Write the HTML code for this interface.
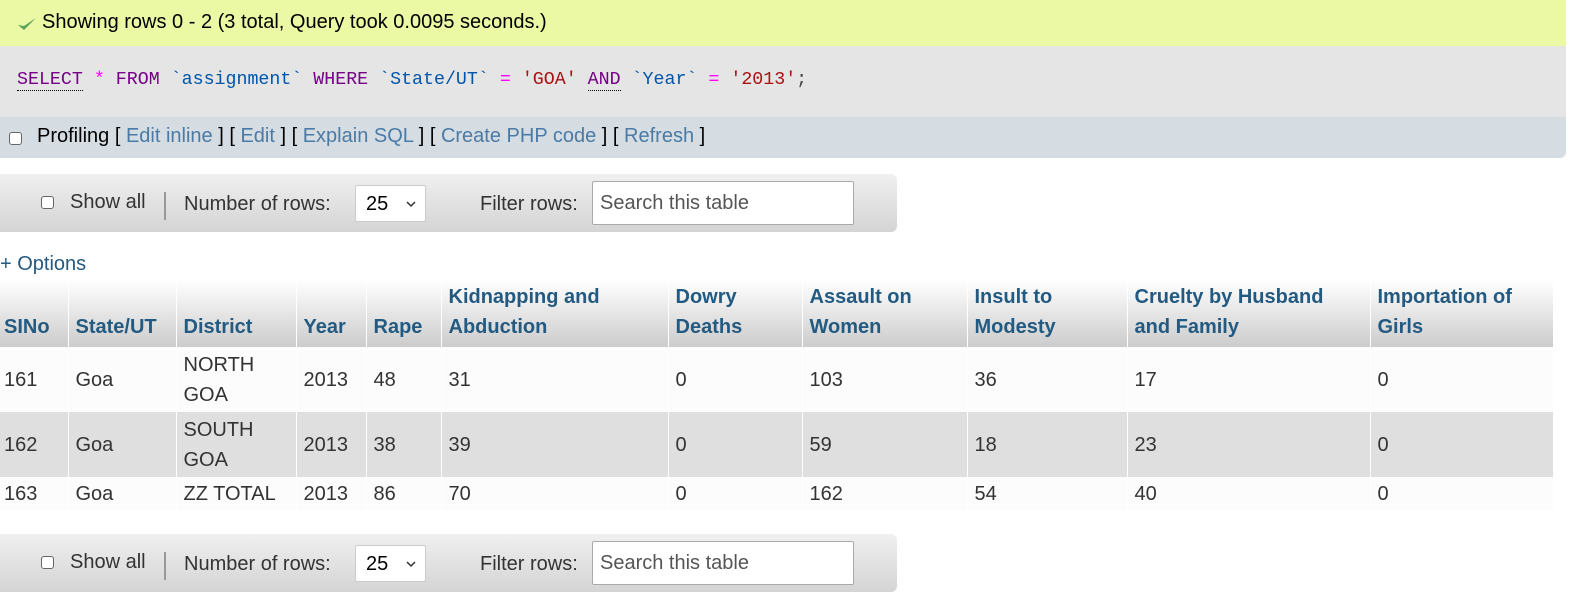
<!DOCTYPE html>
<html><head><style>
*{box-sizing:border-box;margin:0;padding:0}
body{width:1576px;height:600px;position:relative;background:#fff;font-family:"Liberation Sans",sans-serif;font-size:20px;color:#333;overflow:hidden}
.abs{position:absolute}
.top{left:0;top:0;width:1566px;height:46px;background:#ebf8a4;color:#000;}
.top span{position:absolute;left:42px;top:11px;white-space:nowrap}
.sql{left:0;top:46px;width:1566px;height:71px;background:#e5e5e5;font-family:"Liberation Mono",monospace;font-size:18.3px;}
.sql div{position:absolute;left:17px;top:24px;white-space:pre;color:#444}
.kw{color:#770088;border-bottom:1px dotted #000}
.k2{color:#770088}
.op{color:#ff00ff}
.id{color:#0055aa}
.st{color:#aa1111}
.prof{left:0;top:117px;width:1566px;height:41px;background:#d5dde3;border-radius:0 0 6px 0;color:#000}
.prof span{position:absolute;left:37px;top:8px;white-space:pre}
.prof a{color:#4a7aa5;text-decoration:none}
.cb{position:absolute;width:13px;height:13px;border:1px solid #666;border-radius:3px;background:#fff}
.nav{left:0;width:897px;height:58px;border-radius:0 6px 6px 0;background:linear-gradient(#f0f0f0,#d4d4d4)}
.nav .t{position:absolute;color:#333;white-space:pre}
.sel{position:absolute;left:355px;top:11px;width:71px;height:37px;background:#fff;border:1px solid #ccc;border-radius:2px}
.sel span{position:absolute;left:10px;top:7px;color:#000}
.inp{position:absolute;left:592px;top:7px;width:262px;height:44px;background:#fff;border:1px solid #aaa;border-radius:2px}
.inp span{position:absolute;left:7px;top:10px;color:#555}
table{position:absolute;left:0;top:280px;border-collapse:collapse;width:1553px;table-layout:fixed}
th{background:linear-gradient(#fff,#ccc);color:#235a81;font-weight:bold;text-align:left;vertical-align:bottom;padding:2px 0 5px 7px;line-height:30px;border-left:1px solid #fff;height:65px;white-space:nowrap;overflow:hidden}
th:first-child{border-left:none;padding-left:4px}
td{padding:0 0 0 7px;line-height:30px;border-left:1px solid #fff;white-space:nowrap;overflow:hidden}
td:first-child{padding-left:4px;border-left:none}
tr.a td{background:#fcfcfd;height:65px}
tr.b td{background:#dfdfdf;height:65px}
tr.c td{background:#fcfcfd;height:33px}
</style></head><body>
<div class="abs top"><svg style="position:absolute;left:17px;top:16px" width="20" height="16" viewBox="0 0 20 16"><path d="M1 9 L7 14 L19 2 L7 10 Z" fill="#5aa55a"/></svg><span>Showing rows 0 - 2 (3 total, Query took 0.0095 seconds.)</span></div>
<div class="abs sql"><div><span class="kw">SELECT</span> <span class="op">*</span> <span class="k2">FROM</span> <span class="id">`assignment`</span> <span class="k2">WHERE</span> <span class="id">`State/UT`</span> <span class="op">=</span> <span class="st">'GOA'</span> <span class="kw">AND</span> <span class="id">`Year`</span> <span class="op">=</span> <span class="st">'2013'</span>;</div></div>
<div class="abs prof"><div class="cb" style="left:9px;top:15px"></div><span>Profiling [ <a>Edit inline</a> ] [ <a>Edit</a> ] [ <a>Explain SQL</a> ] [ <a>Create PHP code</a> ] [ <a>Refresh</a> ]</span></div>

<div class="abs nav" style="top:174px">
<div class="cb" style="left:41px;top:22px"></div><span class="t" style="left:70px;top:17px">Show all</span>
<div style="position:absolute;left:164px;top:18px;width:2px;height:28px;background:#999"></div>
<span class="t" style="left:184px;top:19px">Number of rows:</span>
<div class="sel"><span>25</span><svg style="position:absolute;left:50px;top:15px" width="10" height="7"><path d="M1 1 L5 5 L9 1" stroke="#333" stroke-width="1.5" fill="none"/></svg></div>
<span class="t" style="left:480px;top:19px">Filter rows:</span>
<div class="inp"><span>Search this table</span></div>
</div>

<div class="abs" style="left:0;top:253px;color:#235a81">+ Options</div>

<table>
<colgroup><col style="width:68px"><col style="width:108px"><col style="width:120px"><col style="width:70px"><col style="width:75px"><col style="width:227px"><col style="width:134px"><col style="width:165px"><col style="width:160px"><col style="width:243px"><col style="width:183px"></colgroup>
<tr><th>SINo</th><th>State/UT</th><th>District</th><th>Year</th><th>Rape</th><th>Kidnapping and<br>Abduction</th><th>Dowry<br>Deaths</th><th>Assault on<br>Women</th><th>Insult to<br>Modesty</th><th>Cruelty by Husband<br>and Family</th><th>Importation of<br>Girls</th></tr>
<tr class="a"><td>161</td><td>Goa</td><td>NORTH<br>GOA</td><td>2013</td><td>48</td><td>31</td><td>0</td><td>103</td><td>36</td><td>17</td><td>0</td></tr>
<tr class="b"><td>162</td><td>Goa</td><td>SOUTH<br>GOA</td><td>2013</td><td>38</td><td>39</td><td>0</td><td>59</td><td>18</td><td>23</td><td>0</td></tr>
<tr class="c"><td>163</td><td>Goa</td><td>ZZ TOTAL</td><td>2013</td><td>86</td><td>70</td><td>0</td><td>162</td><td>54</td><td>40</td><td>0</td></tr>
</table>

<div class="abs nav" style="top:534px">
<div class="cb" style="left:41px;top:22px"></div><span class="t" style="left:70px;top:17px">Show all</span>
<div style="position:absolute;left:164px;top:18px;width:2px;height:28px;background:#999"></div>
<span class="t" style="left:184px;top:19px">Number of rows:</span>
<div class="sel"><span>25</span><svg style="position:absolute;left:50px;top:15px" width="10" height="7"><path d="M1 1 L5 5 L9 1" stroke="#333" stroke-width="1.5" fill="none"/></svg></div>
<span class="t" style="left:480px;top:19px">Filter rows:</span>
<div class="inp"><span>Search this table</span></div>
</div>
</body></html>
